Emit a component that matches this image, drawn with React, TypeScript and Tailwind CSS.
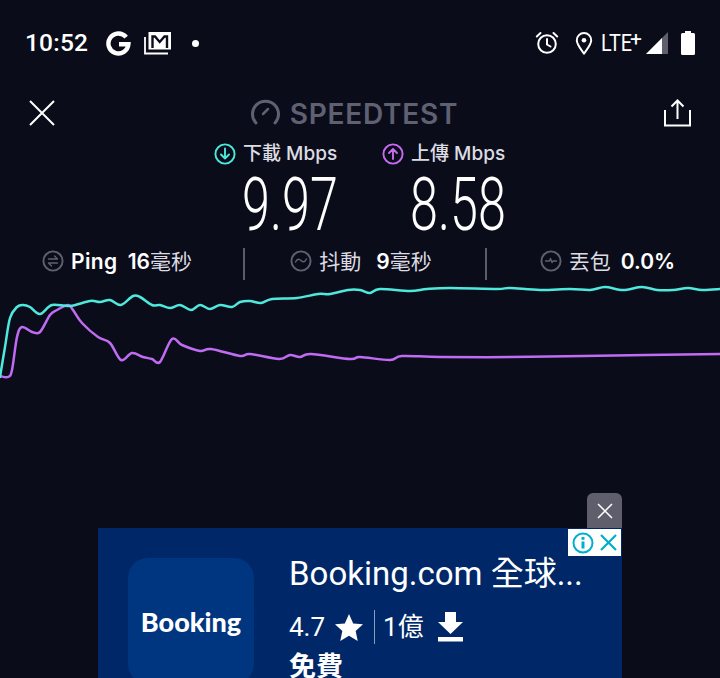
import React from "react";

const download: [number, number][] = [[0,377],[5,347],[10,318],[17,307],[23,305],[30,307],[40,314],[52,305],[70,306],[90,301],[100,302],[110,300],[121,305],[133,296],[140,297],[152,305],[160,305],[170,308],[180,305],[191,310],[200,305],[210,309],[220,305],[232,307],[240,302],[250,301],[261,303],[272,299],[297,298],[318,294],[330,294],[348,290],[360,290],[370,293],[380,289],[410,291],[427,289],[450,288],[497,289],[510,288],[540,290],[570,289],[590,290],[605,287],[623,290],[642,287],[657,290],[673,290],[688,288],[702,290],[720,289]];
const upload: [number, number][] = [[0,376],[8,377],[12,370],[17,337],[22,327],[32,332],[40,332],[50,315],[57,310],[68,305],[73,310],[82,323],[98,337],[110,343],[121,360],[132,353],[143,357],[152,359],[160,362],[172,339],[182,345],[200,351],[211,349],[240,356],[250,354],[279,359],[290,355],[300,357],[311,354],[350,359],[360,357],[390,360],[402,356],[440,357],[510,357],[583,356],[720,354]];

// Catmull-Rom smoothing so the throughput traces read as curves
function smooth(p: [number, number][]) {
  let d = `M${p[0][0]} ${p[0][1]}`;
  for (let i = 0; i < p.length - 1; i++) {
    const a = p[Math.max(i - 1, 0)], b = p[i], c = p[i + 1], e = p[Math.min(i + 2, p.length - 1)];
    d += ` C${(b[0] + (c[0] - a[0]) / 6).toFixed(1)} ${(b[1] + (c[1] - a[1]) / 6).toFixed(1)} ${(c[0] - (e[0] - b[0]) / 6).toFixed(1)} ${(c[1] - (e[1] - b[1]) / 6).toFixed(1)} ${c[0]} ${c[1]}`;
  }
  return d;
}

const cjk = "font-['Inter','Noto_Sans_CJK_TC',sans-serif]";

function Ring({ color, children }: { color: string; children: React.ReactNode }) {
  return (
    <svg width="22" height="22" viewBox="0 0 22 22" fill="none" stroke={color} strokeWidth="1.9" strokeLinecap="round" strokeLinejoin="round">
      <circle cx="11" cy="11" r="9.6" />
      {children}
    </svg>
  );
}

function Divider() {
  return <div className="w-[2px] h-[32px] mt-[3px] bg-[#5b5d6c] shrink-0" />;
}

export default function App() {
  return (
    <div className={`w-[720px] h-[678px] overflow-hidden bg-[#0b0c1a] text-white flex flex-col ${cjk}`}>
      {/* system status bar */}
      <div className="h-[86px] pl-[25px] pr-[25px] flex items-center shrink-0">
        <span className="text-[24.5px] font-medium font-['Roboto',sans-serif] leading-none w-[61px] tracking-[0.2px]">10:52</span>
        <svg className="ml-[20px]" width="25" height="25" viewBox="0 0 25 25" fill="none">
          <path d="M20.2 6.2 A10 10 0 1 0 22.4 13.2 L13 13.2" stroke="#fff" strokeWidth="4.4" />
        </svg>
        <svg className="ml-[13px]" width="28" height="24" viewBox="0 0 28 24" fill="none">
          <path d="M1 6v16.500h23" stroke="#fff" strokeWidth="1.800" />
          <rect x="4.500" y="1" width="22.500" height="17.500" fill="#fff" />
          <path d="M8.500 17V5.500h2.500L15.700 11l4.800-5.500H23V17" stroke="#0b0c1a" strokeWidth="2.400" />
        </svg>
        <span className="ml-[20px] w-[7px] h-[7px] rounded-full bg-white" />
        <div className="flex-1" />
        <svg width="24" height="24" viewBox="0 0 24 24" fill="none" stroke="#fff" strokeWidth="2" strokeLinecap="round">
          <circle cx="12" cy="13" r="8.800" />
          <path d="M12 8v5.500l3.500 2" />
          <path d="M1.800 5.500 5.500 2M22.200 5.500 18.500 2" />
        </svg>
        <svg className="ml-[16px]" width="18" height="24" viewBox="0 0 18 24" fill="none" stroke="#fff" strokeWidth="2">
          <path d="M9 22.500C5 17 1.800 13.500 1.800 9.200a7.200 7.200 0 0 1 14.400 0C16.200 13.500 13 17 9 22.500Z" />
          <circle cx="9" cy="9.200" r="2.300" fill="#fff" stroke="none" />
        </svg>
        <span className="ml-[8px] text-[23px] leading-none font-['Roboto',sans-serif] scale-x-[0.86] origin-left w-[29px]">LTE</span>
        <span className="text-[21px] leading-none font-['Roboto',sans-serif] -mt-[8px] w-[12px]">+</span>
        <svg className="ml-[4px]" width="22" height="22" viewBox="0 0 22 22">
          <path d="M0 22 22 0v22Z" fill="#5f5f6e" />
          <path d="M0 22 16 6v16Z" fill="#fff" />
        </svg>
        <svg className="ml-[13px]" width="14" height="24" viewBox="0 0 14 24">
          <path d="M4 0h6v2h2.500A1.500 1.500 0 0 1 14 3.500V22.500A1.500 1.500 0 0 1 12.500 24H1.500A1.500 1.500 0 0 1 0 22.500V3.500A1.500 1.500 0 0 1 1.500 2H4Z" fill="#fff" />
        </svg>
      </div>

      {/* title row */}
      <div className="h-[54px] pl-[29px] pr-[29px] flex items-center justify-between shrink-0">
        <svg width="26" height="26" viewBox="0 0 26 26" fill="none" stroke="#fff" strokeWidth="2">
          <path d="M1 1l24 24M25 1 1 25" />
        </svg>
        <div className="flex items-center mt-[2px] mr-[9px] text-[#5f6172]">
          <svg className="-mt-[5px]" width="29" height="26" viewBox="0 0 29 26" fill="none" stroke="currentColor" strokeWidth="3" strokeLinecap="round">
            <path d="M5 24A13 13 0 1 1 24 24" />
            <path d="M12 15l5-5" strokeWidth="2.500" />
          </svg>
          <span className="ml-[10px] text-[28px] font-semibold leading-none tracking-[0.75px] font-['Inter',sans-serif]">SPEEDTEST</span>
        </div>
        <svg width="28" height="28" viewBox="0 0 28 28" fill="none" stroke="#fff" strokeWidth="2">
          <path d="M2 11v15.500h25V11M14.500 20V2M8.500 7.500l6-6 6 6" />
        </svg>
      </div>

      {/* result headings */}
      <div className="h-[26px] pt-[1px] flex justify-center gap-[44px] text-[19px] font-medium leading-none text-[#dcdce3] shrink-0">
        <div className="w-[124px] flex items-center gap-[7px] whitespace-nowrap">
          <Ring color="#4ce8dc"><path d="M11 5.500v10M7 11.500l4 4 4-4" /></Ring>
          <span>下載 Mbps</span>
        </div>
        <div className="w-[124px] flex items-center gap-[7px] whitespace-nowrap">
          <Ring color="#c56cf0"><path d="M11 16V6M7 10l4-4 4 4" /></Ring>
          <span>上傳 Mbps</span>
        </div>
      </div>

      {/* result values */}
      <div className="h-[78px] flex justify-center gap-[44px] shrink-0">
        {["9.97", "8.58"].map((v) => (
          <div key={v} className="w-[124px] flex justify-end items-center">
            <span className="text-[74px] leading-none font-light font-['Roboto',sans-serif] scale-x-[0.68] origin-right whitespace-nowrap">{v}</span>
          </div>
        ))}
      </div>

      {/* latency stats */}
      <div className="h-[36px] flex items-center shrink-0 text-[21px] leading-none text-[#dcdce2]">
        <div className="w-[243px] pr-[9px] -mt-[2px] flex justify-center items-center gap-[7px] whitespace-nowrap">
          <Ring color="#5f616f">
            <path d="M6.500 9h9l-3-3M15.500 13h-9l3 3" strokeWidth="1.400" />
          </Ring>
          <span className="font-semibold text-white tracking-[0.4px]">Ping</span>
          <span className="ml-[3px]"><span className="font-semibold text-white">16</span>毫秒</span>
        </div>
        <Divider />
        <div className="flex-1 pr-[8px] -mt-[2px] flex justify-center items-center gap-[7px] whitespace-nowrap">
          <Ring color="#5f616f">
            <path d="M5.500 12c2-4 4-3 5.500-1.500s3.500 2.500 5.500-1.500" strokeWidth="1.400" />
          </Ring>
          <span>抖動</span>
          <span className="ml-[8px]"><span className="font-semibold text-white">9</span>毫秒</span>
        </div>
        <Divider />
        <div className="w-[233px] pl-[8px] -mt-[2px] flex justify-center items-center gap-[7px] whitespace-nowrap">
          <Ring color="#5f616f">
            <path d="M5.500 11h4l1-2.500 1.500 4 1-1.500h3.500" strokeWidth="1.400" />
          </Ring>
          <span>丟包</span>
          <span className="ml-[3px] font-semibold text-white">0.0%</span>
        </div>
      </div>

      {/* throughput traces */}
      <svg className="shrink-0" width="720" height="120" viewBox="0 280 720 120" fill="none" strokeWidth="2.500" strokeLinecap="round" strokeLinejoin="round">
        <path d={smooth(upload)} stroke="#c06cf2" />
        <path d={smooth(download)} stroke="#4fe8dc" />
      </svg>

      {/* banner ad */}
      <div className="relative mt-[128px] ml-[98px] w-[524px] flex-1 bg-[#002868] flex">
        <button className="absolute right-0 -top-[35px] w-[35px] h-[35px] rounded-t-[6px] bg-[#5e5e6c] flex items-center justify-center">
          <svg width="16" height="16" viewBox="0 0 16 16" stroke="#fff" strokeWidth="1.500"><path d="M1 1l14 14M15 1 1 15" /></svg>
        </button>
        <div className="absolute right-px top-px w-[53px] h-[27px] bg-white flex items-center justify-center gap-[6px]">
          <svg width="22" height="22" viewBox="0 0 22 22" fill="none" stroke="#00aecd" strokeWidth="2">
            <circle cx="11" cy="11" r="9.500" />
            <path d="M11 9.500v7" strokeWidth="3" />
            <path d="M11 5v2.800" strokeWidth="3" />
          </svg>
          <svg width="17" height="17" viewBox="0 0 17 17" stroke="#00aecd" strokeWidth="2.200"><path d="M1 1l15 15M16 1 1 16" /></svg>
        </div>
        <div className="ml-[30px] mt-[30px] w-[126px] h-[126px] rounded-[20px] bg-[#003580] flex items-center justify-center shrink-0">
          <span className="text-[27px] font-black leading-none font-['Lato',sans-serif] text-white">Booking</span>
        </div>
        <div className="ml-[35px] mt-[26px] flex flex-col font-['Roboto','Noto_Sans_CJK_TC',sans-serif]">
          <span className="text-[33px] leading-[40px] whitespace-nowrap">Booking.com 全球...</span>
          <div className="mt-[16px] h-[34px] flex items-center text-[26px] leading-none">
            <span>4.7</span>
            <svg className="ml-[10px]" width="28" height="27" viewBox="0 0 24 23" fill="#fff"><path d="M12 0l3.600 8 8.400.800-6.300 5.700 1.800 8.500L12 18.600 4.500 23l1.800-8.500L0 8.800 8.400 8Z" /></svg>
            <div className="ml-[11px] w-px h-[34px] bg-[#8a9cbc]" />
            <span className="ml-[8px]">1億</span>
            <svg className="ml-[14px]" width="25" height="30" viewBox="0 0 25 30" fill="#fff"><path d="M7 0h11v10h7L12.500 22 0 10h7ZM0 25h25v4.500H0Z" /></svg>
          </div>
          <span className="mt-[8px] text-[27px] leading-[30px] font-bold">免費</span>
        </div>
      </div>
    </div>
  );
}
